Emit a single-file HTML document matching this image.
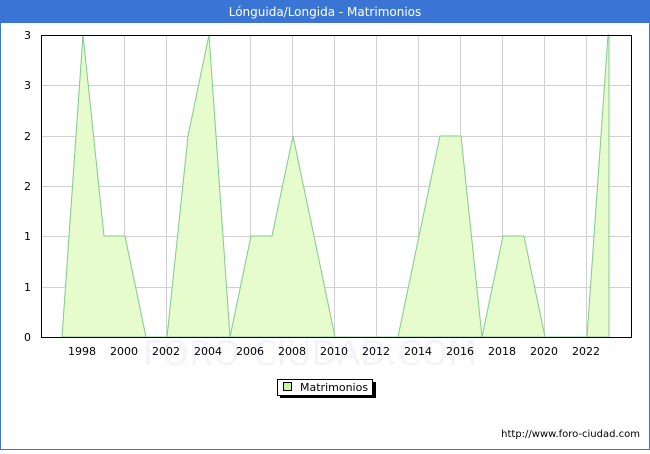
<!DOCTYPE html>
<html><head><style>
body{margin:0;width:650px;height:450px;overflow:hidden;background:#fff;font-family:"DejaVu Sans","Liberation Sans",sans-serif;}
</style></head><body>
<svg width="650" height="450" xmlns="http://www.w3.org/2000/svg" font-family="DejaVu Sans, Liberation Sans, sans-serif">
<rect x="0.5" y="0.5" width="649" height="449" fill="#fff" stroke="#3a75d6"/>
<rect x="0" y="0" width="650" height="23" fill="#3a75d6"/>
<text x="325" y="16" font-size="12" fill="#fff" text-anchor="middle">Lónguida/Longida - Matrimonios</text>
<text x="310" y="365" font-size="34" fill="#f2f4fa" text-anchor="middle">FORO-CIUDAD.COM</text>
<g stroke="#d0d0d0" stroke-width="1">
<line x1="41" y1="85.5" x2="631" y2="85.5"/><line x1="41" y1="136.5" x2="631" y2="136.5"/><line x1="41" y1="186.5" x2="631" y2="186.5"/><line x1="41" y1="236.5" x2="631" y2="236.5"/><line x1="41" y1="287.5" x2="631" y2="287.5"/>
<line x1="82.5" y1="35" x2="82.5" y2="337"/><line x1="124.5" y1="35" x2="124.5" y2="337"/><line x1="166.5" y1="35" x2="166.5" y2="337"/><line x1="208.5" y1="35" x2="208.5" y2="337"/><line x1="250.5" y1="35" x2="250.5" y2="337"/><line x1="292.5" y1="35" x2="292.5" y2="337"/><line x1="334.5" y1="35" x2="334.5" y2="337"/><line x1="376.5" y1="35" x2="376.5" y2="337"/><line x1="418.5" y1="35" x2="418.5" y2="337"/><line x1="460.5" y1="35" x2="460.5" y2="337"/><line x1="502.5" y1="35" x2="502.5" y2="337"/><line x1="544.5" y1="35" x2="544.5" y2="337"/><line x1="586.5" y1="35" x2="586.5" y2="337"/>
</g>
<polygon fill="#e6fccc" stroke="#7fcc8c" stroke-width="1" points="62,337 83,35 104,236 125,236 146,337 167,337 188,136 209,35 230,337 251,236 272,236 293,136 314,236 335,337 356,337 377,337 398,337 419,236 440,136 461,136 482,337 503,236 524,236 545,337 566,337 587,337 608,35 609,35 609,337"/>
<rect x="41.5" y="35.5" width="590" height="302" fill="none" stroke="#000"/>
<g font-size="11" fill="#000" text-anchor="end">
<text x="31" y="39">3</text><text x="31" y="89">3</text><text x="31" y="140">2</text><text x="31" y="190">2</text><text x="31" y="240">1</text><text x="31" y="291">1</text><text x="31" y="341">0</text>
</g>
<g font-size="11" fill="#000" text-anchor="middle">
<text x="82" y="355">1998</text><text x="124" y="355">2000</text><text x="166" y="355">2002</text><text x="208" y="355">2004</text><text x="250" y="355">2006</text><text x="292" y="355">2008</text><text x="334" y="355">2010</text><text x="376" y="355">2012</text><text x="418" y="355">2014</text><text x="460" y="355">2016</text><text x="502" y="355">2018</text><text x="544" y="355">2020</text><text x="586" y="355">2022</text>
</g>
<rect x="280" y="382" width="96" height="16" fill="#000"/>
<rect x="277.5" y="379.5" width="95" height="16" fill="#fff" stroke="#000"/>
<rect x="283.5" y="382.5" width="8" height="8" fill="#ccf5a0" stroke="#000"/>
<text x="300" y="391" font-size="11" fill="#000">Matrimonios</text>
<text x="640" y="437" font-size="10" fill="#000" text-anchor="end">http://www.foro-ciudad.com</text>
</svg>
</body></html>
